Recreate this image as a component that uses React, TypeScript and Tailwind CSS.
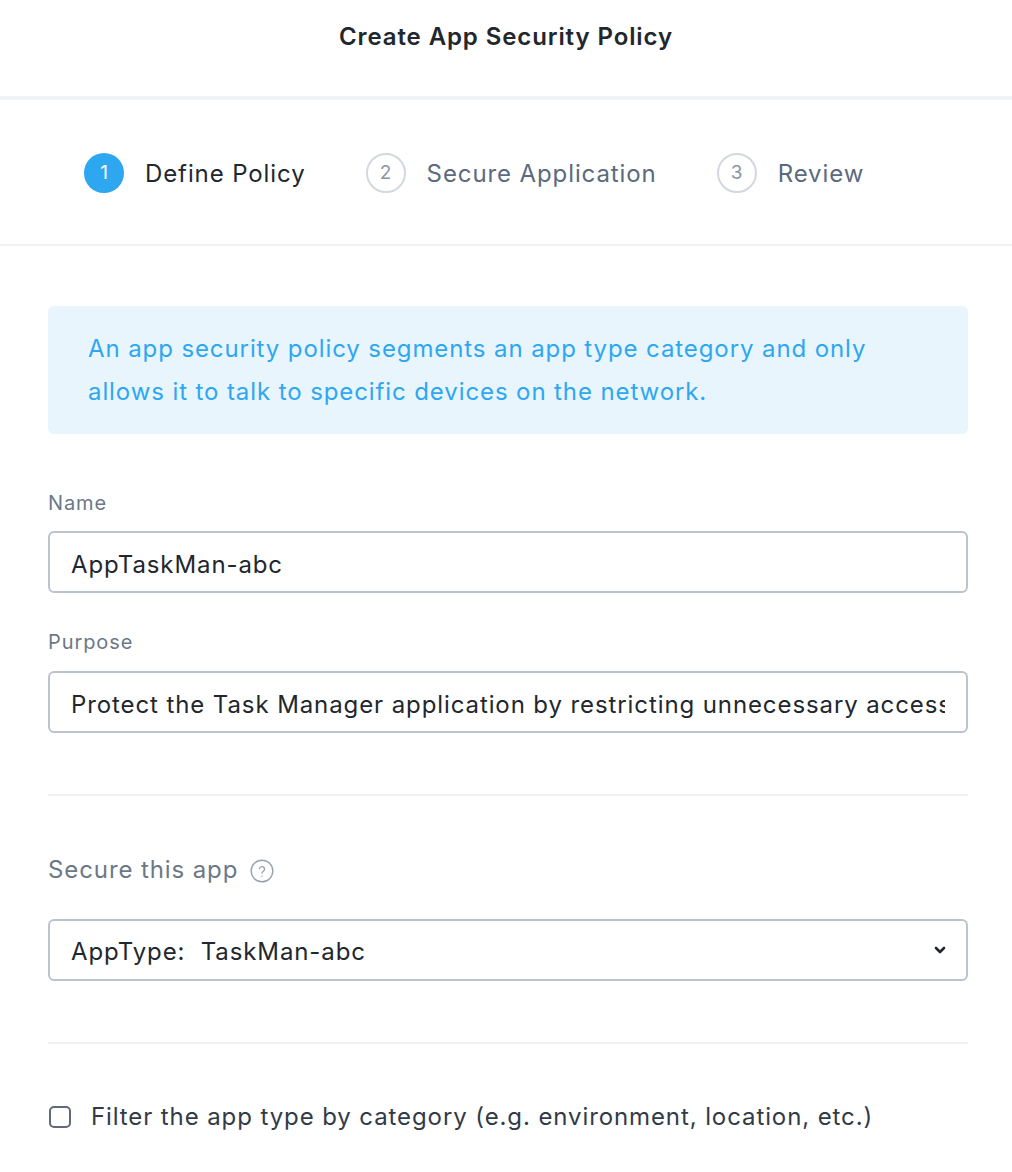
import { useState } from 'react';

const font = { fontFamily: 'Inter, "Open Sans", sans-serif' };

interface StepProps {
  num: number;
  label: string;
  active?: boolean;
}

function Step({ num, label, active }: StepProps) {
  return (
    <div className="flex items-center gap-[21px]">
      <span
        className={`w-10 h-10 rounded-full flex items-center justify-center text-[19px] tracking-normal ${
          active
            ? 'bg-[#2ea7f1] text-white'
            : 'border-2 border-[#d3d8df] text-[#8994a3]'
        }`}
      >
        {num}
      </span>
      <span className={`text-[24px] pt-0.5 ${active ? 'text-[#22272e]' : 'text-[#5b6a7e]'}`}>{label}</span>
    </div>
  );
}

export default function App() {
  const [name, setName] = useState('AppTaskMan-abc');
  const [purpose, setPurpose] = useState(
    'Protect the Task Manager application by restricting unnecessary access to other applications'
  );
  const [filter, setFilter] = useState(false);

  return (
    <div className="w-[1012px] min-h-[1172px] bg-white tracking-[0.9px]" style={font}>
      {/* Header */}
      <div className="h-[96px] flex justify-center pt-[21px]">
        <h1 className="text-[24px] leading-8 font-semibold text-[#22272e]">Create App Security Policy</h1>
      </div>
      <div className="h-1 bg-[#f0f2f5]" />

      {/* Steps */}
      <div className="h-[146px] pt-0.5 flex items-center gap-[60px] pl-[84px] border-b-2 border-[#f1f2f4]">
        <Step num={1} label="Define Policy" active />
        <Step num={2} label="Secure Application" />
        <Step num={3} label="Review" />
      </div>

      <div className="w-[920px] ml-12 pt-[60px]">
        <div className="bg-[#e8f5fd] rounded-md px-10 py-[21px] text-[24px] leading-[43px] text-[#2ea7f1]">
          An app security policy segments an app type category and only allows it to talk to specific devices on the network.
        </div>

        <label className="block mt-[55px] text-[20px] leading-7 text-[#6b7888]">Name</label>
        <input
          value={name}
          onChange={(e) => setName(e.target.value)}
          className="mt-[14px] w-full h-[62px] px-[21px] pt-1 border-2 border-[#bcc3ce] rounded-md text-[24px] text-[#22272e] outline-none"
        />

        <label className="block mt-[35px] text-[20px] leading-7 text-[#6b7888]">Purpose</label>
        <input
          value={purpose}
          onChange={(e) => setPurpose(e.target.value)}
          className="mt-[15px] w-full h-[62px] px-[21px] pt-1 border-2 border-[#bcc3ce] rounded-md text-[24px] text-[#22272e] outline-none"
        />

        <div className="mt-[61px] h-0.5 bg-[#f0f1f3]" />

        <div className="mt-[58px] flex items-center gap-3 text-[24px] leading-8 text-[#6b7888]">
          Secure this app
          <svg className="w-6 h-6 mt-0.5" viewBox="0 0 24 24" fill="none" stroke="#99a3b0" strokeWidth="1.4">
            <circle cx="12" cy="12" r="10.8" />
            <path d="M9.3 9.6a2.7 2.7 0 0 1 5.3.6c0 1.8-2.6 2.2-2.6 3.9" strokeLinecap="round" />
            <circle cx="12" cy="17.2" r="0.7" fill="#99a3b0" stroke="none" />
          </svg>
        </div>

        <div className="mt-[33px] w-full h-[62px] px-[21px] border-2 border-[#bcc3ce] rounded-md flex items-center justify-between text-[24px] text-[#22272e]">
          <span className="whitespace-pre pt-1">AppType:  TaskMan-abc</span>
          <svg className="w-3.5 h-3.5 mr-[-2px]" viewBox="0 0 14 14" fill="none" stroke="#22272e" strokeWidth="2.6" strokeLinecap="round" strokeLinejoin="round">
            <path d="M3 5l4 4 4-4" />
          </svg>
        </div>

        <div className="mt-[61px] h-0.5 bg-[#f0f1f3]" />

        <label className="mt-[57px] flex items-center gap-5 text-[24px] leading-8 text-[#313b48] cursor-pointer">
          <input
            type="checkbox"
            checked={filter}
            onChange={(e) => setFilter(e.target.checked)}
            className="appearance-none w-[22px] h-[22px] ml-px border-2 border-[#5f6b7a] rounded-[5px] shrink-0"
          />
          Filter the app type by category (e.g. environment, location, etc.)
        </label>
      </div>
    </div>
  );
}
